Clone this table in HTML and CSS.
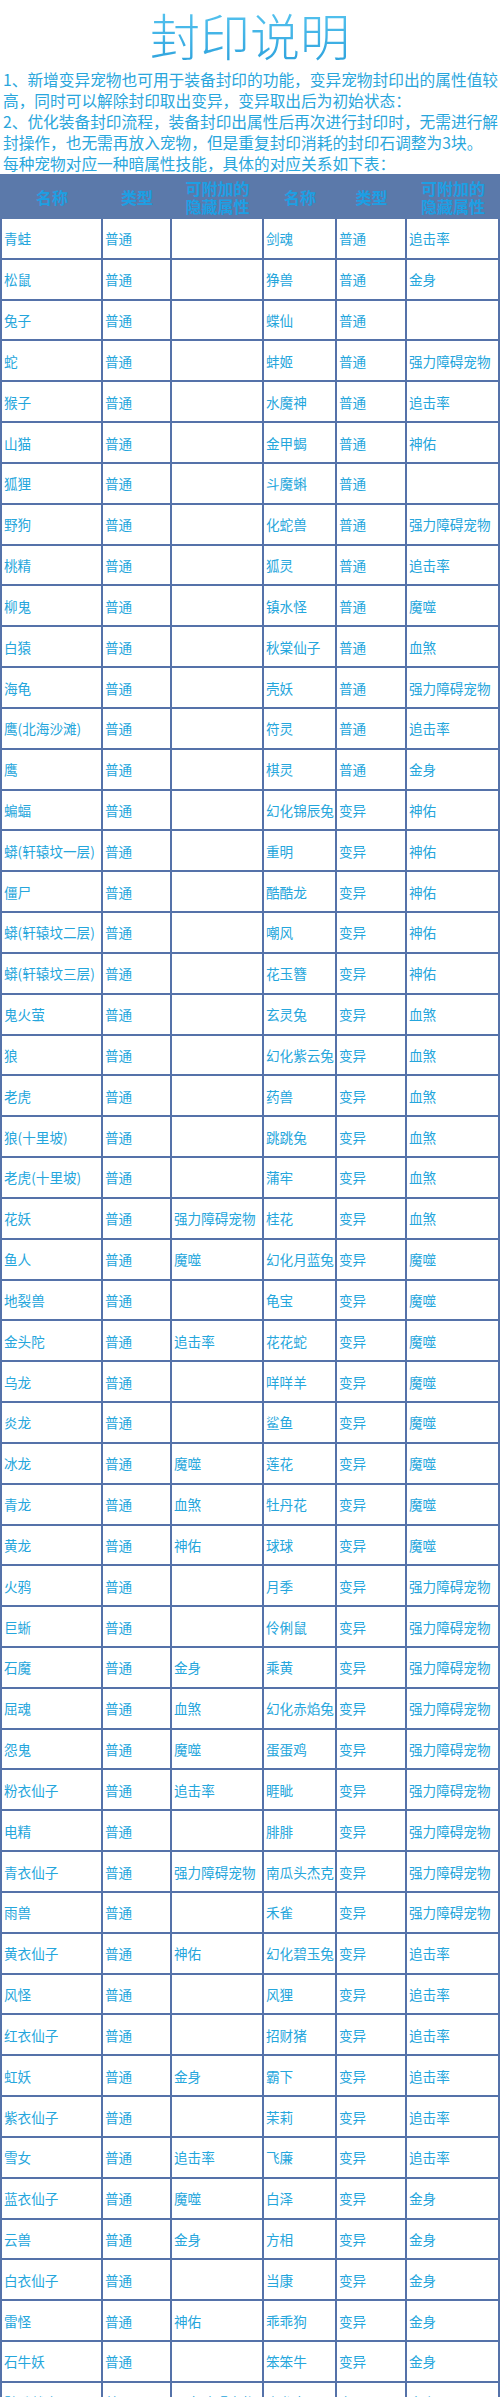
FILE: index.html
```html
<!DOCTYPE html>
<html lang="zh-CN">
<head>
<meta charset="utf-8">
<title>封印说明</title>
<link rel="stylesheet" href="styles.css">
</head>
<body>
<h1 class="title">封印说明</h1>
<div class="intro">
  <div class="line">1、新增变异宠物也可用于装备封印的功能，变异宠物封印出的属性值较</div>
  <div class="line">高，同时可以解除封印取出变异，变异取出后为初始状态：</div>
  <div class="line">2、优化装备封印流程，装备封印出属性后再次进行封印时，无需进行解</div>
  <div class="line">封操作，也无需再放入宠物，但是重复封印消耗的封印石调整为3块。</div>
  <div class="line">每种宠物对应一种暗属性技能，具体的对应关系如下表：</div>
</div>
<table class="pets">
  <colgroup>
    <col class="c-name"><col class="c-type"><col class="c-attr">
    <col class="c-name2"><col class="c-type2"><col class="c-attr2">
  </colgroup>
  <thead>
    <tr><th>名称</th><th>类型</th><th>可附加的<br>隐藏属性</th><th>名称</th><th>类型</th><th>可附加的<br>隐藏属性</th></tr>
  </thead>
  <tbody>
    <tr><td>青蛙</td><td>普通</td><td></td><td>剑魂</td><td>普通</td><td>追击率</td></tr>
    <tr><td>松鼠</td><td>普通</td><td></td><td>狰兽</td><td>普通</td><td>金身</td></tr>
    <tr><td>兔子</td><td>普通</td><td></td><td>蝶仙</td><td>普通</td><td></td></tr>
    <tr><td>蛇</td><td>普通</td><td></td><td>蚌姬</td><td>普通</td><td>强力障碍宠物</td></tr>
    <tr><td>猴子</td><td>普通</td><td></td><td>水魔神</td><td>普通</td><td>追击率</td></tr>
    <tr><td>山猫</td><td>普通</td><td></td><td>金甲蝎</td><td>普通</td><td>神佑</td></tr>
    <tr><td>狐狸</td><td>普通</td><td></td><td>斗魔蝌</td><td>普通</td><td></td></tr>
    <tr><td>野狗</td><td>普通</td><td></td><td>化蛇兽</td><td>普通</td><td>强力障碍宠物</td></tr>
    <tr><td>桃精</td><td>普通</td><td></td><td>狐灵</td><td>普通</td><td>追击率</td></tr>
    <tr><td>柳鬼</td><td>普通</td><td></td><td>镇水怪</td><td>普通</td><td>魔噬</td></tr>
    <tr><td>白猿</td><td>普通</td><td></td><td>秋棠仙子</td><td>普通</td><td>血煞</td></tr>
    <tr><td>海龟</td><td>普通</td><td></td><td>壳妖</td><td>普通</td><td>强力障碍宠物</td></tr>
    <tr><td>鹰(北海沙滩)</td><td>普通</td><td></td><td>符灵</td><td>普通</td><td>追击率</td></tr>
    <tr><td>鹰</td><td>普通</td><td></td><td>棋灵</td><td>普通</td><td>金身</td></tr>
    <tr><td>蝙蝠</td><td>普通</td><td></td><td>幻化锦辰兔</td><td>变异</td><td>神佑</td></tr>
    <tr><td>蟒(轩辕坟一层)</td><td>普通</td><td></td><td>重明</td><td>变异</td><td>神佑</td></tr>
    <tr><td>僵尸</td><td>普通</td><td></td><td>酷酷龙</td><td>变异</td><td>神佑</td></tr>
    <tr><td>蟒(轩辕坟二层)</td><td>普通</td><td></td><td>嘲风</td><td>变异</td><td>神佑</td></tr>
    <tr><td>蟒(轩辕坟三层)</td><td>普通</td><td></td><td>花玉簪</td><td>变异</td><td>神佑</td></tr>
    <tr><td>鬼火萤</td><td>普通</td><td></td><td>玄灵兔</td><td>变异</td><td>血煞</td></tr>
    <tr><td>狼</td><td>普通</td><td></td><td>幻化紫云兔</td><td>变异</td><td>血煞</td></tr>
    <tr><td>老虎</td><td>普通</td><td></td><td>药兽</td><td>变异</td><td>血煞</td></tr>
    <tr><td>狼(十里坡)</td><td>普通</td><td></td><td>跳跳兔</td><td>变异</td><td>血煞</td></tr>
    <tr><td>老虎(十里坡)</td><td>普通</td><td></td><td>蒲牢</td><td>变异</td><td>血煞</td></tr>
    <tr><td>花妖</td><td>普通</td><td>强力障碍宠物</td><td>桂花</td><td>变异</td><td>血煞</td></tr>
    <tr><td>鱼人</td><td>普通</td><td>魔噬</td><td>幻化月蓝兔</td><td>变异</td><td>魔噬</td></tr>
    <tr><td>地裂兽</td><td>普通</td><td></td><td>龟宝</td><td>变异</td><td>魔噬</td></tr>
    <tr><td>金头陀</td><td>普通</td><td>追击率</td><td>花花蛇</td><td>变异</td><td>魔噬</td></tr>
    <tr><td>乌龙</td><td>普通</td><td></td><td>咩咩羊</td><td>变异</td><td>魔噬</td></tr>
    <tr><td>炎龙</td><td>普通</td><td></td><td>鲨鱼</td><td>变异</td><td>魔噬</td></tr>
    <tr><td>冰龙</td><td>普通</td><td>魔噬</td><td>莲花</td><td>变异</td><td>魔噬</td></tr>
    <tr><td>青龙</td><td>普通</td><td>血煞</td><td>牡丹花</td><td>变异</td><td>魔噬</td></tr>
    <tr><td>黄龙</td><td>普通</td><td>神佑</td><td>球球</td><td>变异</td><td>魔噬</td></tr>
    <tr><td>火鸦</td><td>普通</td><td></td><td>月季</td><td>变异</td><td>强力障碍宠物</td></tr>
    <tr><td>巨蜥</td><td>普通</td><td></td><td>伶俐鼠</td><td>变异</td><td>强力障碍宠物</td></tr>
    <tr><td>石魔</td><td>普通</td><td>金身</td><td>乘黄</td><td>变异</td><td>强力障碍宠物</td></tr>
    <tr><td>屈魂</td><td>普通</td><td>血煞</td><td>幻化赤焰兔</td><td>变异</td><td>强力障碍宠物</td></tr>
    <tr><td>怨鬼</td><td>普通</td><td>魔噬</td><td>蛋蛋鸡</td><td>变异</td><td>强力障碍宠物</td></tr>
    <tr><td>粉衣仙子</td><td>普通</td><td>追击率</td><td>睚眦</td><td>变异</td><td>强力障碍宠物</td></tr>
    <tr><td>电精</td><td>普通</td><td></td><td>腓腓</td><td>变异</td><td>强力障碍宠物</td></tr>
    <tr><td>青衣仙子</td><td>普通</td><td>强力障碍宠物</td><td>南瓜头杰克</td><td>变异</td><td>强力障碍宠物</td></tr>
    <tr><td>雨兽</td><td>普通</td><td></td><td>禾雀</td><td>变异</td><td>强力障碍宠物</td></tr>
    <tr><td>黄衣仙子</td><td>普通</td><td>神佑</td><td>幻化碧玉兔</td><td>变异</td><td>追击率</td></tr>
    <tr><td>风怪</td><td>普通</td><td></td><td>风狸</td><td>变异</td><td>追击率</td></tr>
    <tr><td>红衣仙子</td><td>普通</td><td></td><td>招财猪</td><td>变异</td><td>追击率</td></tr>
    <tr><td>虹妖</td><td>普通</td><td>金身</td><td>霸下</td><td>变异</td><td>追击率</td></tr>
    <tr><td>紫衣仙子</td><td>普通</td><td></td><td>茉莉</td><td>变异</td><td>追击率</td></tr>
    <tr><td>雪女</td><td>普通</td><td>追击率</td><td>飞廉</td><td>变异</td><td>追击率</td></tr>
    <tr><td>蓝衣仙子</td><td>普通</td><td>魔噬</td><td>白泽</td><td>变异</td><td>金身</td></tr>
    <tr><td>云兽</td><td>普通</td><td>金身</td><td>方相</td><td>变异</td><td>金身</td></tr>
    <tr><td>白衣仙子</td><td>普通</td><td></td><td>当康</td><td>变异</td><td>金身</td></tr>
    <tr><td>雷怪</td><td>普通</td><td>神佑</td><td>乖乖狗</td><td>变异</td><td>金身</td></tr>
    <tr><td>石牛妖</td><td>普通</td><td></td><td>笨笨牛</td><td>变异</td><td>金身</td></tr>
    <tr><td>骷髅战士</td><td>普通</td><td>强力障碍宠物</td><td>小龙女</td><td>变异</td><td>金身</td></tr>
  </tbody>
</table>
</body>
</html>
```
FILE: styles.css
```css
html, body {
  margin: 0;
  padding: 0;
  background: #ffffff;
}

body {
  font-family: "Noto Sans CJK SC", "Noto Sans", sans-serif;
  color: #26a6dc;
}

.title {
  margin: 0;
  height: 69px;
  line-height: 69px;
  text-align: center;
  font-size: 50px;
  font-weight: 300;
  color: #33ace3;
  background: linear-gradient(180deg, #5cc9f2 0%, #2a9fdb 100%);
  -webkit-background-clip: text;
  background-clip: text;
  -webkit-text-fill-color: transparent;
}

.intro {
  padding: 0 3px;
  font-size: 15.7px;
  line-height: 21px;
  color: #29a6dc;
}

.intro .line {
  white-space: nowrap;
}

.pets {
  border-collapse: collapse;
  table-layout: fixed;
  width: 498px;
  margin: 0;
}

.c-name { width: 101px; }
.c-type { width: 69px; }
.c-attr { width: 92px; }
.c-name2 { width: 73px; }
.c-type2 { width: 70px; }
.c-attr2 { width: 93px; }

.pets th,
.pets td {
  border: 2px solid #5572a9;
  padding: 0 1px 0 2px;
  white-space: nowrap;
  overflow: hidden;
  vertical-align: middle;
}

.pets thead tr {
  height: 43px;
}

.pets th {
  background: #5b79aa;
  border-color: #5b79aa;
  color: #1d9fe3;
  font-size: 16px;
  line-height: 18px;
  font-weight: 700;
  text-align: center;
}

.pets tbody tr {
  height: 40.83px;
}

.pets td {
  font-size: 13.6px;
  line-height: 18px;
  color: #25a6dc;
  text-align: left;
}
```
